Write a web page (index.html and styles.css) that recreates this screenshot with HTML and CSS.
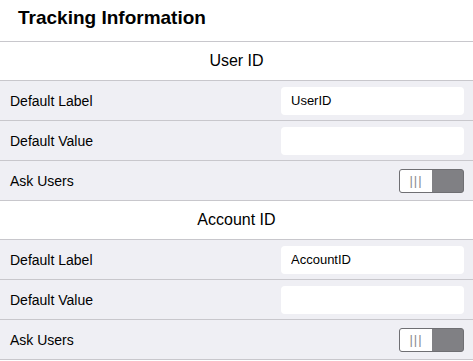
FILE: index.html
```html
<!DOCTYPE html>
<html lang="en">
<head>
  <meta charset="UTF-8" />
  <title>Tracking Information</title>
  <link rel="stylesheet" href="styles.css">
</head>
<body>

<header class="title-bar">
  <h1>Tracking Information</h1>
</header>

<section class="group">
  <div class="group-head">User ID</div>
  <div class="row">
    <span class="label">Default Label</span>
    <input class="field" type="text" value="UserID" />
  </div>
  <div class="row">
    <span class="label">Default Value</span>
    <input class="field" type="text" value="" />
  </div>
  <div class="row">
    <span class="label">Ask Users</span>
    <div class="toggle"><span class="thumb">|||</span></div>
  </div>
</section>

<section class="group">
  <div class="group-head">Account ID</div>
  <div class="row">
    <span class="label">Default Label</span>
    <input class="field" type="text" value="AccountID" />
  </div>
  <div class="row">
    <span class="label">Default Value</span>
    <input class="field" type="text" value="" />
  </div>
  <div class="row">
    <span class="label">Ask Users</span>
    <div class="toggle"><span class="thumb">|||</span></div>
  </div>
</section>

</body>
</html>
```

FILE: styles.css
```css
* {
  box-sizing: border-box;
}

html, body {
  margin: 0;
  padding: 0;
  font-family: 'Liberation Sans', Arial, sans-serif;
  background: #fff;
  color: #000;
}

.title-bar {
  height: 42px;
  padding: 0 18px;
  display: flex;
  align-items: center;
  border-bottom: 1px solid #c8c7cc;
}

.title-bar h1 {
  margin: 0 0 6px;
  font-size: 19px;
  font-weight: bold;
}

.group-head {
  height: 39px;
  display: flex;
  align-items: center;
  justify-content: center;
  font-size: 16px;
  border-bottom: 1px solid #c8c7cc;
  background: #fff;
}

.row {
  height: 40px;
  display: flex;
  align-items: center;
  justify-content: space-between;
  padding: 0 9px 0 10px;
  background: #efeff4;
  border-bottom: 1px solid #c8c7cc;
}

.label {
  font-size: 14px;
}

.field {
  width: 183px;
  height: 28px;
  border: none;
  border-radius: 4px;
  background: #fff;
  padding: 0 10px;
  font-family: inherit;
  font-size: 13px;
  color: #000;
  outline: none;
}

.toggle {
  width: 65px;
  height: 24px;
  border: 1px solid #6f6f73;
  border-radius: 3px;
  background: #808084;
  display: flex;
}

.thumb {
  width: 32px;
  height: 100%;
  background: #fff;
  border-radius: 2px 0 0 2px;
  display: flex;
  align-items: center;
  justify-content: center;
  font-size: 13px;
  color: #8a8a8e;
  letter-spacing: 1px;
}
```
